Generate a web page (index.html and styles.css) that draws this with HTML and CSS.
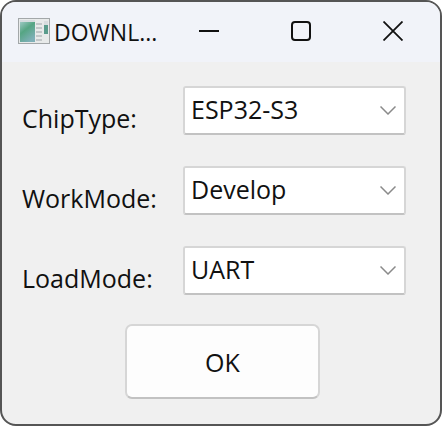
FILE: index.html
```html
<!DOCTYPE html>
<html>
<head>
  <meta charset="UTF-8">
  <title>DOWNLOAD</title>
  <link rel="stylesheet" href="styles.css">
</head>
<body>
  <div class="window">
    <div class="title-bar">
      <svg class="app-icon" width="32" height="26" viewBox="0 0 32 26">
        <defs>
          <linearGradient id="pane" x1="0" y1="0" x2="0.6" y2="1">
            <stop offset="0" stop-color="#9cc9c4"/>
            <stop offset="0.45" stop-color="#55a583"/>
            <stop offset="1" stop-color="#7fb0b8"/>
          </linearGradient>
        </defs>
        <rect x="0.5" y="0.5" width="31" height="25" fill="#e8eaea" stroke="#a3a7a9"/>
        <rect x="2" y="2" width="15" height="2" fill="#d5dcdf"/>
        <rect x="2" y="4" width="15" height="20" fill="url(#pane)"/>
        <rect x="18" y="5" width="6" height="2" fill="#c3c7c9"/>
        <rect x="18" y="9" width="6" height="2" fill="#c3c7c9"/>
        <rect x="18" y="13" width="6" height="2" fill="#c3c7c9"/>
        <rect x="18" y="17" width="6" height="2" fill="#c3c7c9"/>
        <rect x="18" y="21" width="6" height="2" fill="#c3c7c9"/>
        <rect x="26" y="3" width="4" height="4" fill="#d8dcde"/>
        <rect x="26" y="7" width="4" height="9" fill="#5a9c8c"/>
      </svg>
      <span class="title-text">DOWNL...</span>
      <div class="win-buttons">
        <svg class="win-btn" width="20" height="20" viewBox="0 0 20 20"><path d="M0 10H20" stroke="#111" stroke-width="2" fill="none"/></svg>
        <svg class="win-btn" width="20" height="20" viewBox="0 0 20 20"><rect x="1" y="1" width="18" height="18" rx="3" stroke="#111" stroke-width="2" fill="none"/></svg>
        <svg class="win-btn" width="20" height="20" viewBox="0 0 20 20"><path d="M0.5 0.5L19.5 19.5M19.5 0.5L0.5 19.5" stroke="#111" stroke-width="1.8" fill="none"/></svg>
      </div>
    </div>

    <div class="content">
      <div class="form-row">
        <label class="form-label">ChipType:</label>
        <div class="combo">
          <span class="combo-text">ESP32-S3</span>
          <svg class="combo-arrow" width="16" height="9" viewBox="0 0 16 9"><path d="M0.5 0.5L8 8L15.5 0.5" stroke="#8a8a8a" stroke-width="1.5" fill="none"/></svg>
        </div>
      </div>
      <div class="form-row">
        <label class="form-label">WorkMode:</label>
        <div class="combo">
          <span class="combo-text">Develop</span>
          <svg class="combo-arrow" width="16" height="9" viewBox="0 0 16 9"><path d="M0.5 0.5L8 8L15.5 0.5" stroke="#8a8a8a" stroke-width="1.5" fill="none"/></svg>
        </div>
      </div>
      <div class="form-row">
        <label class="form-label">LoadMode:</label>
        <div class="combo">
          <span class="combo-text">UART</span>
          <svg class="combo-arrow" width="16" height="9" viewBox="0 0 16 9"><path d="M0.5 0.5L8 8L15.5 0.5" stroke="#8a8a8a" stroke-width="1.5" fill="none"/></svg>
        </div>
      </div>
      <button class="ok-btn">OK</button>
    </div>
  </div>
</body>
</html>
```

FILE: styles.css
```css
* {
  box-sizing: border-box;
}

html, body {
  margin: 0;
  height: 100%;
  background-color: #ffffff;
}

.window {
  width: 442px;
  height: 426px;
  display: flex;
  flex-direction: column;
  background-color: #f0f0f0;
  border: 2px solid #555555;
  border-radius: 16px;
  overflow: hidden;
  font-family: "Open Sans", "Noto Sans", sans-serif;
  color: #111111;
}

.title-bar {
  height: 60px;
  flex: none;
  display: flex;
  align-items: center;
  padding: 0 37px 3px 16px;
  background-color: #f1f3f9;
}

.app-icon {
  flex: none;
  margin-right: 4px;
}

.title-text {
  font-size: 23px;
  white-space: nowrap;
  margin-top: 3px;
}

.win-buttons {
  margin-left: auto;
  display: flex;
  align-items: center;
  gap: 72px;
}

.win-btn {
  display: block;
}

.content {
  flex: 1;
  display: flex;
  flex-direction: column;
  padding: 24px 34px 0 20px;
}

.form-row {
  display: flex;
  justify-content: space-between;
  height: 49px;
  margin-bottom: 31px;
}

.form-label {
  font-size: 25px;
  line-height: 32px;
  padding-top: 16px;
}

.combo {
  width: 223px;
  height: 49px;
  display: flex;
  align-items: center;
  justify-content: space-between;
  padding: 0 8px 3px 6px;
  background-color: #ffffff;
  border: 2px solid #d6d6d6;
  border-bottom-color: #c2c2c2;
  border-radius: 3px;
  font-size: 25px;
}

.combo-arrow {
  flex: none;
  margin-top: 3px;
}

.ok-btn {
  align-self: flex-start;
  margin: -2px 0 0 103px;
  width: 195px;
  height: 75px;
  background-color: #fdfdfd;
  border: 2px solid #d6d6d6;
  border-bottom-color: #c2c2c2;
  border-radius: 7px;
  font-family: inherit;
  font-size: 25px;
  color: #111111;
}
```
